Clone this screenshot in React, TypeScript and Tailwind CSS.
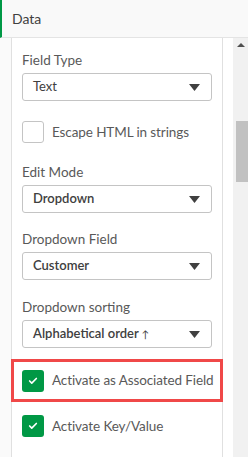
import { Check } from 'lucide-react';

const Caret = () => (
  <svg width="11" height="7" viewBox="0 0 11 7" className="shrink-0">
    <path d="M0 0 H11 L5.5 7 Z" fill="#404040" />
  </svg>
);

const Select = ({ value, bold, arrow }: { value: string; bold?: boolean; arrow?: boolean }) => (
  <div className="h-[28px] w-[190px] border border-[#c4c4c4] rounded-[3px] flex items-center justify-between pl-[10px] pr-[11px] bg-white">
    <span className={`text-[13px] text-[#404040] whitespace-nowrap ${bold ? 'font-semibold' : ''}`}>
      {value}
      {arrow && <span className="text-[10px] font-normal ml-[3px]">↑</span>}
    </span>
    <Caret />
  </div>
);

const Label = ({ text }: { text: string }) => (
  <div className="text-[13.5px] text-[#595959] leading-[18px] mb-[4px]">{text}</div>
);

const CheckBox = ({ label, checked }: { label: string; checked?: boolean }) => (
  <div className="flex items-center gap-[8px]">
    {checked ? (
      <div className="w-[22px] h-[22px] rounded-[3px] bg-[#009845] flex items-center justify-center">
        <Check className="w-[10px] h-[10px] text-white" strokeWidth={4} />
      </div>
    ) : (
      <div className="w-[22px] h-[22px] rounded-[3px] border border-[#c4c4c4] bg-white" />
    )}
    <span className="text-[13.5px] text-[#595959] whitespace-nowrap tracking-[-0.1px]">{label}</span>
  </div>
);

export default function App() {
  return (
    <div className="w-[248px] h-[457px] overflow-hidden bg-white flex flex-col" style={{ fontFamily: 'Lato, "Open Sans", sans-serif' }}>
      {/* Header */}
      <div className="h-[38px] shrink-0 bg-[#f9f9f9] border-b border-[#e4e4e4] border-l-[2px] border-l-[#009845] flex items-center pl-[10px]">
        <span className="text-[14px] text-[#404040]">Data</span>
      </div>

      <div className="flex flex-1 min-h-0">
        <div className="w-[11px] shrink-0 bg-[#fafafa]" />
        <div className="w-[212px] shrink-0 border-l border-r border-[#e0e0e0] bg-white pt-[13px]">
          <div className="pl-[10px]">
            <Label text="Field Type" />
            <Select value="Text" />
            <div className="mt-[20px]">
              <CheckBox label="Escape HTML in strings" />
            </div>
            <div className="mt-[20px]">
              <Label text="Edit Mode" />
              <Select value="Dropdown" bold />
            </div>
            <div className="mt-[17px]">
              <Label text="Dropdown Field" />
              <Select value="Customer" bold />
            </div>
            <div className="mt-[18px]">
              <Label text="Dropdown sorting" />
              <Select value="Alphabetical order" bold arrow />
            </div>
          </div>
          <div className="mt-[11px] -mx-px border-[3px] border-[#f04848] h-[43px] flex items-center pl-[8px]">
            <CheckBox label="Activate as Associated Field" checked />
          </div>
          <div className="mt-[13px] pl-[10px]">
            <CheckBox label="Activate Key/Value" checked />
          </div>
        </div>
        <div className="w-[10px] shrink-0" />
        <div className="w-[15px] shrink-0 bg-[#f1f1f1] flex flex-col items-center pt-[5px]">
          <svg width="8" height="4" viewBox="0 0 8 4">
            <path d="M0 4 L4 0 L8 4 Z" fill="#505050" />
          </svg>
          <div className="mt-[74px] ml-[3px] w-[13px] h-[61px] bg-[#c1c1c1]" />
        </div>
      </div>
    </div>
  );
}
